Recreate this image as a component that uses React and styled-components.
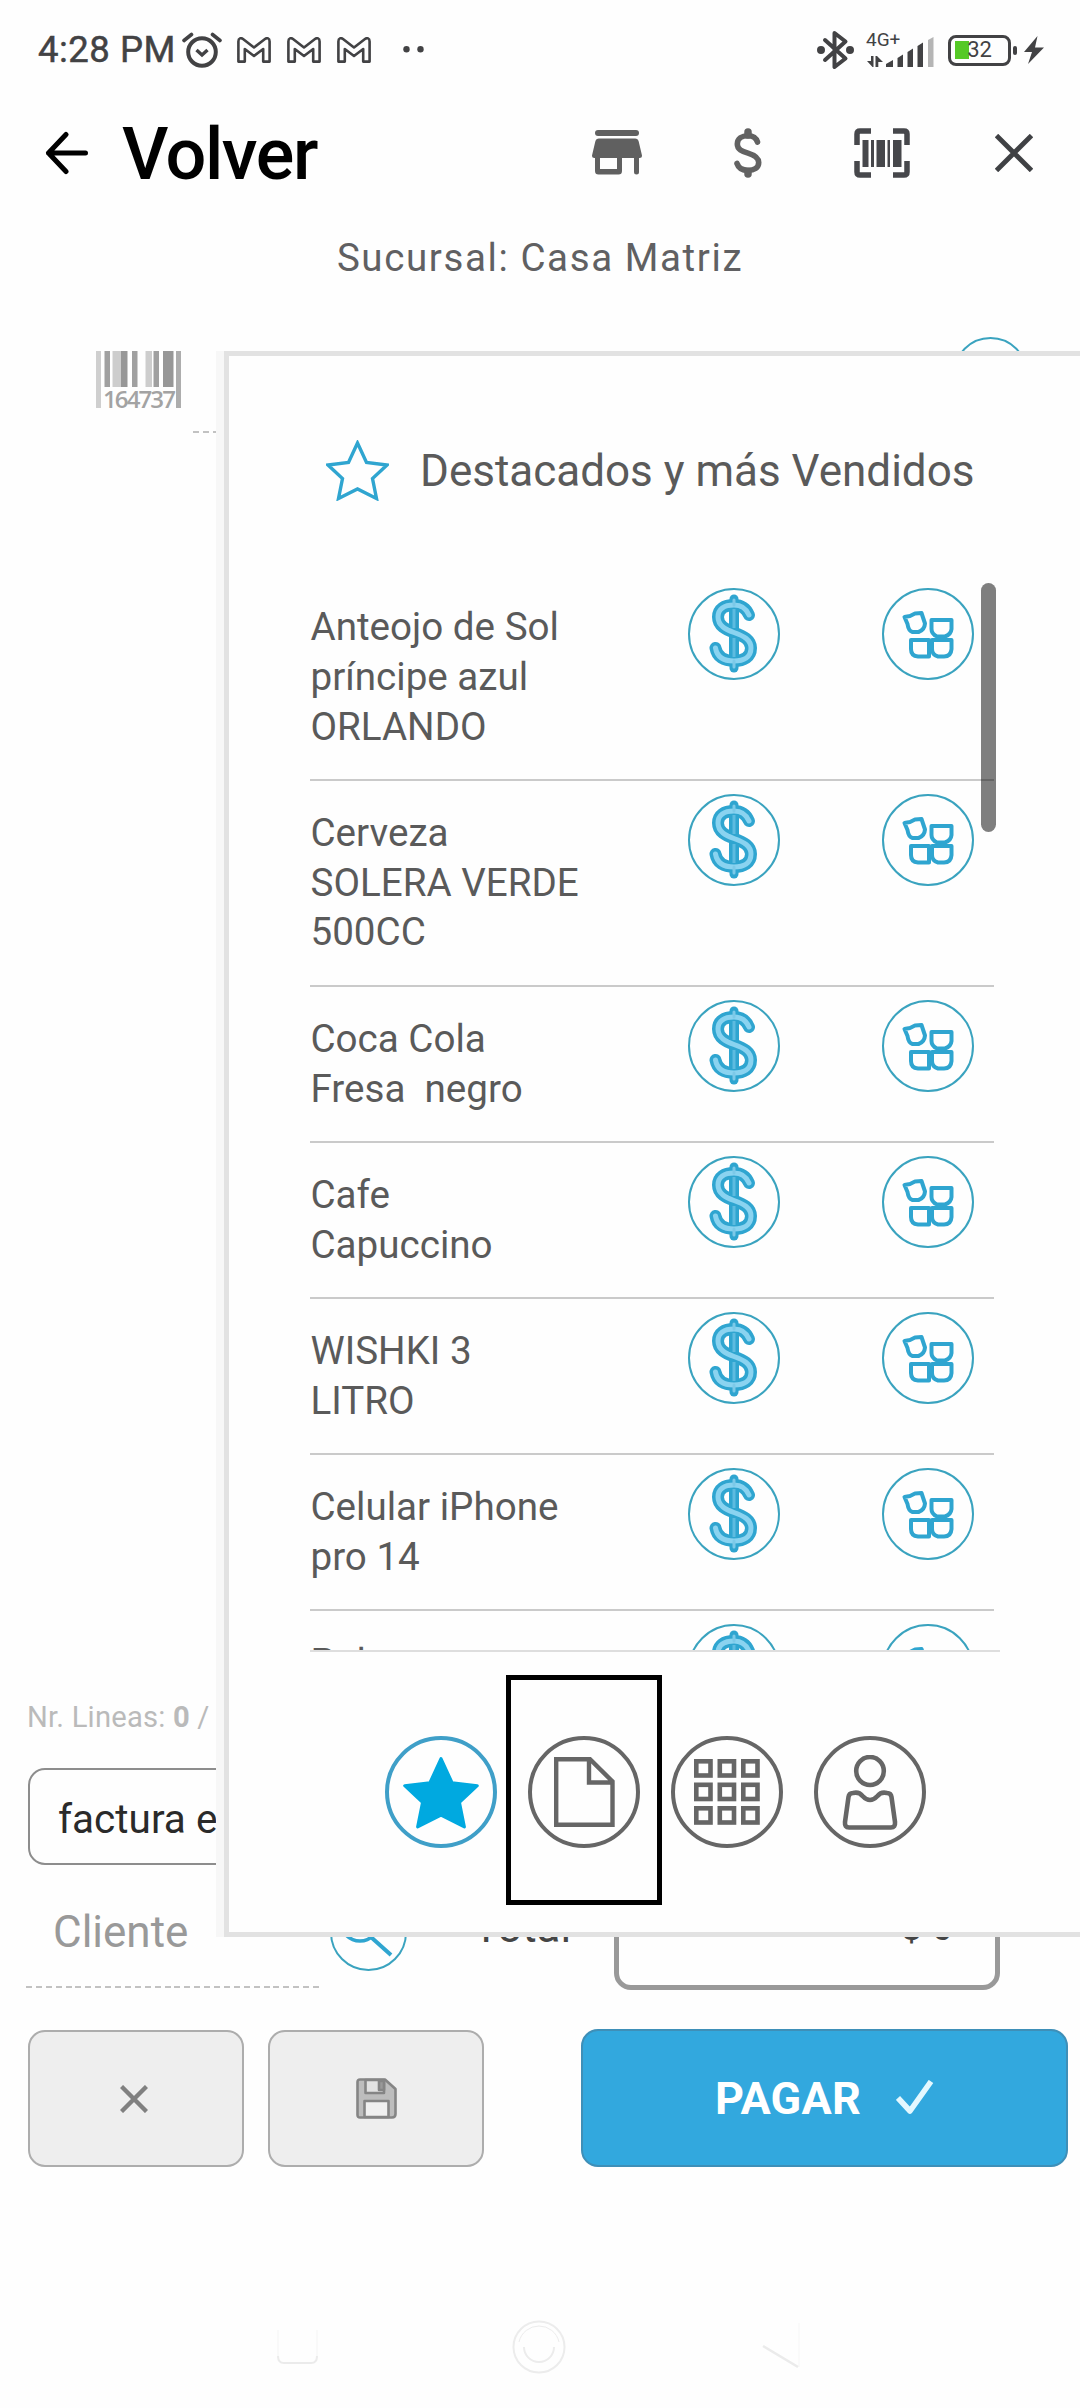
import React from 'react';
import styled, { createGlobalStyle } from 'styled-components';

const GlobalStyle = createGlobalStyle`
  *, *::before, *::after { box-sizing: border-box; }
  body {
    margin: 0;
    background: #fefefe;
    font-family: Roboto, "Liberation Sans", sans-serif;
    color: #5a5a5a;
  }
  svg { display: block; flex: none; }
  button { font: inherit; padding: 0; }
`;

const BLUE = '#2fa5d0';
const TEAL = '#3aa3bf';
const INK = '#424244';
const GREY = '#666';

const Screen = styled.main`
  position: relative;
  display: flex;
  flex-direction: column;
  width: 1080px;
  height: 2408px;
  overflow: hidden;
  background: #fefefe;
`;

/* ---------- status bar ---------- */

const StatusBar = styled.div`
  display: flex;
  align-items: center;
  justify-content: space-between;
  height: 100px;
  padding: 0 36px 0 38px;
  color: ${INK};
`;

const StatusGroup = styled.div`
  display: flex;
  align-items: center;
`;

const Clock = styled.span`
  width: 144px;
  font-size: 36.5px;
  font-weight: 400;
  -webkit-text-stroke: 0.5px ${INK};
  line-height: 42px;
  letter-spacing: 0.5px;
  white-space: nowrap;
`;

const MailIcons = styled.div`
  display: flex;
  gap: 16px;
  margin: 0 32px 0 15px;
`;

const Network = styled.div`
  display: flex;
  flex-direction: column;
  align-items: flex-start;
  width: 68px;
  height: 36px;
  margin: 0 14px 0 12px;
`;

const NetworkLabel = styled.span`
  font-size: 19px;
  line-height: 18px;
  height: 17px;
  margin-top: -1px;
`;

const NetworkBars = styled.div`
  margin-top: -12px;
`;

const Battery = styled.div`
  display: flex;
  align-items: center;
  justify-content: center;
  width: 63px;
  height: 31px;
  border: 3px solid ${INK};
  border-radius: 8px;
  background: linear-gradient(#55c926, #55c926) 4px 3px / 14px 18px no-repeat;
  font-size: 22px;
  line-height: 24px;
`;

const BatteryTip = styled.i`
  width: 4px;
  height: 9px;
  margin: 0 7px 0 2px;
  border-radius: 2px;
  background: ${INK};
`;

/* ---------- header ---------- */

const Header = styled.header`
  display: flex;
  align-items: center;
  height: 106px;
  padding-left: 45px;
`;

const Title = styled.h1`
  flex: 1;
  margin: 0 0 0 33px;
  padding-top: 3px;
  font-size: 72px;
  font-weight: 500;
  line-height: 84px;
  letter-spacing: -1.4px;
  color: #000;
`;

const HeaderTools = styled.nav`
  display: flex;
  align-items: center;
  padding-right: 47px;
`;

const ToolButton = styled.button`
  display: grid;
  place-items: center;
  width: ${(p) => p.$width}px;
  height: 60px;
  margin-right: ${(p) => p.$gap || 0}px;
  border: 0;
  background: none;
`;

const Branch = styled.div`
  height: 103px;
  font-size: 38.5px;
  line-height: 103px;
  letter-spacing: 1.6px;
  text-align: center;
  color: #606062;
`;

/* ---------- sale form ---------- */

const ScanRow = styled.div`
  display: flex;
  height: 124px;
  padding: 0 52px 0 96px;
`;

const BarcodeBox = styled.div`
  padding-top: 42px;
`;

const Barcode = styled.div`
  display: flex;
  flex-direction: column;
  align-items: center;
  width: 85px;
  height: 57px;
  background:
    linear-gradient(#cfcfcf, #cfcfcf) 0 0 / 5px 57px no-repeat,
    linear-gradient(#adadad, #adadad) 80px 0 / 5px 57px no-repeat;
`;

const BarcodeDigits = styled.span`
  margin-top: -1px;
  font-family: "Open Sans", Roboto, sans-serif;
  font-size: 24px;
  font-weight: 600;
  line-height: 23px;
  letter-spacing: -1.9px;
  color: #a3a3a3;
`;

const dashed = `
  background: repeating-linear-gradient(90deg, #c2c2c2 0 6px, transparent 6px 9.9px)
    0 100% / 100% 2px no-repeat;
`;

const ScanInput = styled.div`
  flex: 1;
  margin: 0 60px 0 12px;
  ${dashed}
`;

const RoundButton = styled.button`
  display: grid;
  place-items: center;
  flex: none;
  width: ${(p) => p.$size}px;
  height: ${(p) => p.$size}px;
  border: ${(p) => p.$line || 2}px solid ${(p) => p.$color || TEAL};
  border-radius: 50%;
  background: #fefefe;
`;

const ScanButton = styled(RoundButton)`
  margin-top: 28px;
`;

const LinesArea = styled.div`
  flex: 1;
  min-height: 0;
`;

const LineCount = styled.div`
  height: 40px;
  padding-left: 27px;
  font-size: 29.2px;
  line-height: 40px;
  letter-spacing: 0.2px;
  color: #bababa;
  b { font-weight: 700; }
`;

const DocumentSelect = styled.div`
  width: 560px;
  height: 97px;
  margin: 31px 0 0 28px;
  padding-left: 28px;
  border: 2px solid #8d8d8d;
  border-radius: 17px;
  font-size: 40.5px;
  line-height: 98px;
  color: #2a2a2a;
`;

const TotalsRow = styled.div`
  display: flex;
  align-items: flex-start;
  height: 125px;
  padding-left: 26px;
`;

const ClientField = styled.div`
  width: 294px;
  height: 123px;
  padding-left: 27px;
  font-size: 44px;
  line-height: 135px;
  color: #999;
  ${dashed}
`;

const SearchButton = styled(RoundButton)`
  margin: 29px 0 0 10px;
`;

const TotalLabel = styled.span`
  width: 141px;
  margin-left: 66px;
  font-size: 44px;
  line-height: 125px;
  color: #444;
`;

const TotalBox = styled.div`
  width: 386px;
  height: 125px;
  padding-right: 42px;
  border: 5px solid #999;
  border-radius: 17px;
  font-size: 38px;
  line-height: 114px;
  text-align: right;
  color: #444;
`;

const Actions = styled.div`
  display: flex;
  height: 138px;
  margin-top: 39.5px;
  padding-left: 28px;
`;

const GreyButton = styled.button`
  display: grid;
  place-items: center;
  width: 216px;
  height: 137px;
  margin: 1px 24px 0 0;
  padding-right: ${(p) => p.$inset || 0}px;
  border: 2px solid #adadad;
  border-radius: 17px;
  background: #eee;
`;

const PayButton = styled.button`
  display: flex;
  align-items: center;
  width: 487px;
  margin-left: 73px;
  padding-left: 132px;
  border: 2px solid #3e8fb8;
  border-radius: 17px;
  background: #32a8de;
  color: #fff;
`;

const PayLabel = styled.span`
  width: 181px;
  font-size: 45px;
  font-weight: 700;
  letter-spacing: 0.2px;
  text-align: left;
`;

const SystemNav = styled.div`
  display: flex;
  align-items: flex-start;
  height: 241px;
  padding: 153px 0 0 277px;
`;

const NavGap = styled.i`
  width: ${(p) => p.$width}px;
`;

/* ---------- drawer ---------- */

const Drawer = styled.aside`
  position: absolute;
  top: 351px;
  left: 216px;
  width: 864px;
  height: 1586px;
  padding-left: 8px;
  background: #f7f7f7;
`;

const DrawerBody = styled.div`
  display: flex;
  flex-direction: column;
  height: 100%;
  border: 5px solid #e2e2e2;
  border-right: 0;
  background: #fefefe;
`;

const DrawerTitle = styled.h2`
  display: flex;
  align-items: center;
  gap: 31px;
  height: 219px;
  margin: 0;
  padding: 10px 0 0 97px;
  font-size: 44px;
  font-weight: 400;
  line-height: 52px;
  color: #5a5a5a;
  white-space: nowrap;
`;

const ListViewport = styled.div`
  position: relative;
  width: 690px;
  height: 1077px;
  margin-left: 81px;
  overflow: hidden;
  border-bottom: 2px solid #dedede;
`;

const Row = styled.div`
  display: grid;
  grid-template-columns: 378px 193.500px 112.500px;
  width: 684px;
  border-bottom: 2px solid #cacaca;
`;

const ProductName = styled.span`
  padding: 27px 0 27.5px 0.5px;
  font-size: 38.6px;
  line-height: 49.8px;
  white-space: pre;
  color: #5a5a5a;
`;

const Cell = styled.div`
  padding-top: 13px;
`;

const ScrollThumb = styled.i`
  position: absolute;
  top: 8px;
  right: 4px;
  width: 15px;
  height: 249px;
  border-radius: 8px;
  background: rgba(0, 0, 0, 0.5);
`;

const Tabs = styled.div`
  display: flex;
  gap: 31px;
  padding: 84px 0 0 156px;
`;

const TabSlot = styled.div`
  position: relative;
  width: 112px;
  height: 112px;
`;

const Highlight = styled.i`
  position: absolute;
  top: -61px;
  left: -22px;
  width: 156px;
  height: 230px;
  border: 5px solid #000;
`;

/* ---------- icons ---------- */

const STAR = 'M31.5 3 L40.5 22.5 L61 25 L46.5 38.5 L50.5 58.5 L31.5 49 L12.5 58.5 L16.5 38.5 L2 25 L22.5 22.5 Z';

const AlarmIcon = () => (
  <svg width="40" height="36" viewBox="0 0 40 36" fill="none" stroke={INK} strokeWidth="4">
    <circle cx="20" cy="20" r="13.8" />
    <path d="M2 8.5 L9.5 2.5 M30.5 2.5 L38 8.5" strokeLinecap="round" strokeWidth="3.6" />
    <path d="M14.5 18 L20 23 L25.5 18" strokeWidth="3.4" />
  </svg>
);

const MailIcon = () => (
  <svg width="34" height="26" viewBox="0 0 34 26" fill="none" stroke={INK} strokeWidth="2.6" strokeLinejoin="round">
    <path d="M1.4 24.6 V4.5 C1.4 1 4 .6 6 2 L17 10.5 L28 2 C30 .6 32.6 1 32.6 4.5 V24.6 H26.2 V12 L17 19 L7.8 12 V24.6 Z" />
  </svg>
);

const DotsIcon = () => (
  <svg width="22" height="8" viewBox="0 0 22 8" fill={INK}>
    <circle cx="3.500" cy="3.2" r="3.2" />
    <circle cx="17.500" cy="3.2" r="3.2" />
  </svg>
);

const BluetoothIcon = () => (
  <svg width="37" height="40" viewBox="0 0 37 40" fill="none" stroke={INK} strokeWidth="4" strokeLinejoin="round" strokeLinecap="round">
    <path d="M8 10 L28.5 28.5 L17.5 37 V3 L28.5 11.5 L8 30" />
    <circle cx="4" cy="20" r="2" />
    <circle cx="33" cy="20" r="2" />
  </svg>
);

const SignalIcon = () => (
  <svg width="68" height="32" viewBox="0 0 68 32" fill={INK}>
    <path d="M5 20 H7.5 V31 H6.5 L1 25 H5 Z M9.5 31 V20 H11 L17 26 H12.3 V31 Z" />
    <path d="M20 31 V28 L27 24 V31 Z M31.5 31 V22 L37 18.5 V31 Z M41.5 31 V16 L47 12.5 V31 Z M51.5 31 V10 L57 6.5 V31 Z" />
    <path fill="#b5b5b5" d="M62 31 V4 L67.5 1 V31 Z" />
  </svg>
);

const BoltIcon = () => (
  <svg width="20" height="28" viewBox="0 0 20 28" fill={INK}>
    <path d="M13.5 0 L0 16 H8 L4 28 L20 11.5 H11 Z" />
  </svg>
);

const BackIcon = () => (
  <svg width="44" height="44" viewBox="0 0 44 44" fill="none" stroke="#000" strokeWidth="5" strokeLinecap="round" strokeLinejoin="round">
    <path d="M40.5 22 H3.5 M21 3.5 L3.5 22 L21 40.5" />
  </svg>
);

const StoreIcon = () => (
  <svg width="50" height="46" viewBox="0 0 50 46" fill="#606060">
    <rect x="3" y="0" width="44" height="6" rx="3" />
    <path d="M7 8.5 H43 Q46 8.5 46.7 11.5 L50 25.5 Q50 28 47.5 28 H2.5 Q0 28 0 25.5 L3.3 11.5 Q4 8.5 7 8.5 Z" />
    <path fillRule="evenodd" d="M3 26 H30 V41 Q30 44.5 26.5 44.5 H6.5 Q3 44.5 3 41 Z M8 28 V39 H25 V28 Z" />
    <path d="M42 26 H47 V42 Q47 44.5 44.5 44.5 Q42 44.5 42 42 Z" />
  </svg>
);

const DollarIcon = () => (
  <svg width="28" height="50" viewBox="0 0 28 50" fill="none" stroke="#626262" strokeWidth="5.6" strokeLinecap="round">
    <path d="M23.5 14 C22 9.5 18.5 7.8 14 7.8 C8 7.8 3.3 10.5 3.3 16 C3.3 21.5 8 23.3 14 25.2 C20.5 27.2 24.7 29.5 24.7 34.5 C24.7 40 20 42.3 14 42.3 C8.5 42.3 4.5 40 3 35.5" />
    <path d="M14 4 V7 M14 43.5 V46" strokeWidth="7.5" />
  </svg>
);

const ScannerIcon = () => (
  <svg width="56" height="50" viewBox="0 0 56 50" fill="#46474b">
    <path d="M3 17 V6 Q3 3 6 3 H17 M39 3 H50 Q53 3 53 6 V17 M53 33 V44 Q53 47 50 47 H39 M17 47 H6 Q3 47 3 44 V33" fill="none" stroke="#46474b" strokeWidth="5.5" />
    <path d="M8.5 12 H14.5 V39 H8.5 Z M17 12 H20 V39 H17 Z M22.5 12 H31 V39 H22.5 Z M33.5 12 H36 V39 H33.5 Z M39 12 H47.5 V39 H39 Z" />
  </svg>
);

const CloseIcon = ({ size, color, weight }) => (
  <svg width={size} height={size} viewBox={`0 0 ${size} ${size}`} fill="none" stroke={color} strokeWidth={weight}>
    <path d={`M1.5 1.5 L${size - 1.5} ${size - 1.5} M${size - 1.5} 1.5 L1.5 ${size - 1.5}`} />
  </svg>
);

const BarsIcon = () => (
  <svg width="70" height="37" viewBox="0 0 70 37">
    <path fill="#a0a0a0" d="M.5 0 H6 V36 H.5 Z M28 0 H33.5 V36 H28 Z M49.5 0 H55 V36 H49.5 Z" />
    <path fill="#cdcdcd" d="M8.5 0 H17 V36 H8.5 Z M41.5 0 H48 V36 H41.5 Z" />
    <path fill="#979797" d="M17 0 H23.5 V36 H17 Z M59 0 H69.5 V36 H59 Z" />
  </svg>
);

const PriceIcon = () => {
  const s = 'M61 27 C58 20 53 17 46 17 C36 17 30 21 30 29 C30 38 38 41.5 46 44.5 C56 48 63 52 63 60 C63 69 56 73 46 73 C36 73 29 69 27.5 60';
  return (
    <svg width="88" height="88" viewBox="2 2 88 88" fill="none" strokeLinecap="round">
      <path d={s} stroke={BLUE} strokeWidth="12" />
      <path d="M46 11 V80" stroke={BLUE} strokeWidth="9" />
      <path d={s} stroke="#8ad3f0" strokeWidth="5" />
      <path d="M46 12 V17 M46 73 V79" stroke="#7cc9e8" strokeWidth="3" />
      <path d="M42.5 21 V40 M49.5 22 V42 M42.5 49 V69 M49.5 50 V69" stroke={BLUE} strokeWidth="3" strokeLinecap="butt" />
      <path d="M46 21 V40 M46 50 V69" stroke="#5dbbe0" strokeWidth="3" strokeLinecap="butt" />
    </svg>
  );
};

const UnitsIcon = () => (
  <svg width="88" height="88" viewBox="2 2 88 88" fill="none" stroke={BLUE} strokeWidth="4" strokeLinejoin="round">
    <path d="M22.5 29 L28 28 L33 25.5 L39.5 25 L43 35.5 Q42.5 42 36.5 44 H30.5 Q26.5 43 25.5 36 Z" />
    <path d="M49.5 32 H69.5 V41 Q69 46.500 63 48.500 H55 Q49.5 46 49.5 41 Z" />
    <path d="M29 52 H47 V68.500 H36 Q29 68 29 61 Z" />
    <path d="M50 52 H69.5 V61 Q69 68.500 62 68.500 H56 Q50 67 50 61 Z" />
  </svg>
);

const OutlineStar = () => (
  <svg width="63" height="61" viewBox="0 0 63 61" fill="none" stroke={BLUE} strokeWidth="3.400">
    <path d={STAR} />
  </svg>
);

const FilledStar = () => (
  <svg width="78" height="75" viewBox="0 0 63 61" fill="#00a9e0" stroke="#00a9e0" strokeWidth="2.5" strokeLinejoin="round">
    <path d={STAR} />
  </svg>
);

const PageIcon = () => (
  <svg width="61" height="70" viewBox="0 0 61 70" fill="none" stroke={GREY} strokeWidth="4.4">
    <path d="M2.2 2.2 H36 L58.5 24.5 V67.8 H2.2 Z M35 2.2 V25.5 H58.5" />
  </svg>
);

const GridIcon = () => (
  <svg width="66" height="66" viewBox="0 0 66 66" fill="none" stroke={GREY} strokeWidth="4.6">
    {[0, 1, 2].map((r) =>
      [0, 1, 2].map((c) => (
        <rect key={`${r}${c}`} x={2.3 + c * 23.5} y={2.3 + r * 23.5} width="14.2" height="14.2" />
      ))
    )}
  </svg>
);

const PersonIcon = () => (
  <svg width="56" height="75" viewBox="0 0 56 75" fill="none" stroke={GREY} strokeWidth="4.6" strokeLinejoin="round">
    <ellipse cx="28" cy="16" rx="13.8" ry="14" />
    <path d="M6.5 42 Q7 38 11 38 Q17 36.5 20.5 41 Q28 49 35.5 41 Q39 36.5 45 38 Q49 38 49.5 42 L53 67 Q53.5 72.5 49 72.5 H7 Q2.5 72.5 3 67 Z" />
  </svg>
);

const SearchIcon = () => (
  <svg width="74" height="74" viewBox="0 0 74 74" fill="none" stroke={BLUE} strokeWidth="3.6">
    <circle cx="28" cy="26" r="19" />
    <path d="M40 42 L59 59" strokeWidth="4" />
  </svg>
);

const SaveIcon = () => (
  <svg width="41" height="41" viewBox="0 0 41 41" fill="#bdbdbd" stroke="#858585" strokeWidth="2.6" strokeLinejoin="round">
    <path d="M4 1.5 H29 L39.5 11 V36 Q39.5 39.5 36 39.5 H4 Q1.5 39.5 1.5 37 V4 Q1.5 1.5 4 1.5 Z" />
    <path d="M9.5 2 H28 V15 H9.5 Z" fill="#e2e2e2" />
    <path d="M23 3 H28 V12 H23 Z" fill="#999" />
    <path d="M8.5 39 V23 H32.5 V39 Z" fill="#f0f0f0" />
  </svg>
);

const CheckIcon = () => (
  <svg width="38" height="36" viewBox="0 0 38 36" fill="none" stroke="#e4f8ff" strokeWidth="5.6">
    <path d="M2 18 L14 31 L35 1.5" strokeLinejoin="round" />
  </svg>
);

const RecentsIcon = () => (
  <svg width="41" height="54" viewBox="0 0 41 54" fill="none">
    <path d="M1 10 V38 M40 10 V38" stroke="#f7f7f7" strokeWidth="1.5" />
    <path d="M1 36 Q1 43 7 43 H34 Q40 43 40 36" stroke="#ebebeb" strokeWidth="2" />
  </svg>
);

const HomeIcon = () => (
  <svg width="54" height="54" viewBox="0 0 54 54" fill="none" stroke="#ececec" strokeWidth="2">
    <circle cx="27" cy="27" r="25.5" />
    <path d="M7 22 A20.5 20.5 0 0 1 47 22" strokeWidth="1" />
    <path d="M12 27 A15 15 0 0 0 42 27" />
  </svg>
);

const BackNavIcon = () => (
  <svg width="40" height="54" viewBox="0 0 40 54" fill="none">
    <path d="M38 3 V47" stroke="#f8f8f8" strokeWidth="1.5" />
    <path d="M2 26 L37 47" stroke="#ebebeb" strokeWidth="2.5" />
  </svg>
);

/* ---------- data ---------- */

const PRODUCTS = [
  'Anteojo de Sol\npríncipe azul\nORLANDO',
  'Cerveza\nSOLERA VERDE\n500CC',
  'Coca Cola\nFresa  negro',
  'Cafe\nCapuccino',
  'WISHKI 3\nLITRO',
  'Celular iPhone\npro 14',
  'Polera',
];

const TABS = [
  { id: 'featured', Icon: FilledStar, color: '#3f9fc8' },
  { id: 'documents', Icon: PageIcon, highlighted: true },
  { id: 'categories', Icon: GridIcon },
  { id: 'clients', Icon: PersonIcon },
];

const ProductRow = ({ name }) => (
  <Row>
    <ProductName>{name}</ProductName>
    <Cell>
      <RoundButton $size={92}><PriceIcon /></RoundButton>
    </Cell>
    <Cell>
      <RoundButton $size={92}><UnitsIcon /></RoundButton>
    </Cell>
  </Row>
);

export default function App() {
  return (
    <>
      <GlobalStyle />
      <Screen>
        <StatusBar>
          <StatusGroup>
            <Clock>4:28 PM</Clock>
            <AlarmIcon />
            <MailIcons>
              <MailIcon />
              <MailIcon />
              <MailIcon />
            </MailIcons>
            <DotsIcon />
          </StatusGroup>
          <StatusGroup>
            <BluetoothIcon />
            <Network>
              <NetworkLabel>4G+</NetworkLabel>
              <NetworkBars><SignalIcon /></NetworkBars>
            </Network>
            <Battery>32</Battery>
            <BatteryTip />
            <BoltIcon />
          </StatusGroup>
        </StatusBar>

        <Header>
          <BackIcon />
          <Title>Volver</Title>
          <HeaderTools>
            <ToolButton $width={50} $gap={92}><StoreIcon /></ToolButton>
            <ToolButton $width={28} $gap={92}><DollarIcon /></ToolButton>
            <ToolButton $width={56} $gap={85}><ScannerIcon /></ToolButton>
            <ToolButton $width={38}><CloseIcon size={38} color="#3f4144" weight={4.8} /></ToolButton>
          </HeaderTools>
        </Header>

        <Branch>Sucursal: Casa Matriz</Branch>

        <ScanRow>
          <BarcodeBox>
            <Barcode>
              <BarsIcon />
              <BarcodeDigits>164737</BarcodeDigits>
            </Barcode>
          </BarcodeBox>
          <ScanInput />
          <ScanButton $size={75} />
        </ScanRow>

        <LinesArea />

        <LineCount>Nr. Lineas: <b>0</b> /</LineCount>
        <DocumentSelect>factura e</DocumentSelect>
        <TotalsRow>
          <ClientField>Cliente</ClientField>
          <SearchButton $size={77}><SearchIcon /></SearchButton>
          <TotalLabel>Total</TotalLabel>
          <TotalBox>$ 0</TotalBox>
        </TotalsRow>

        <Actions>
          <GreyButton $inset={4}><CloseIcon size={28} color="#808080" weight={4.4} /></GreyButton>
          <GreyButton><SaveIcon /></GreyButton>
          <PayButton>
            <PayLabel>PAGAR</PayLabel>
            <CheckIcon />
          </PayButton>
        </Actions>

        <SystemNav>
          <RecentsIcon />
          <NavGap $width={194} />
          <HomeIcon />
          <NavGap $width={195} />
          <BackNavIcon />
        </SystemNav>

        <Drawer>
          <DrawerBody>
            <DrawerTitle>
              <OutlineStar />
              Destacados y más Vendidos
            </DrawerTitle>
            <ListViewport>
              {PRODUCTS.map((name) => (
                <ProductRow key={name} name={name} />
              ))}
              <ScrollThumb />
            </ListViewport>
            <Tabs>
              {TABS.map(({ id, Icon, color, highlighted }) => (
                <TabSlot key={id}>
                  <RoundButton $size={112} $line={4} $color={color || GREY}><Icon /></RoundButton>
                  {highlighted && <Highlight />}
                </TabSlot>
              ))}
            </Tabs>
          </DrawerBody>
        </Drawer>
      </Screen>
    </>
  );
}
